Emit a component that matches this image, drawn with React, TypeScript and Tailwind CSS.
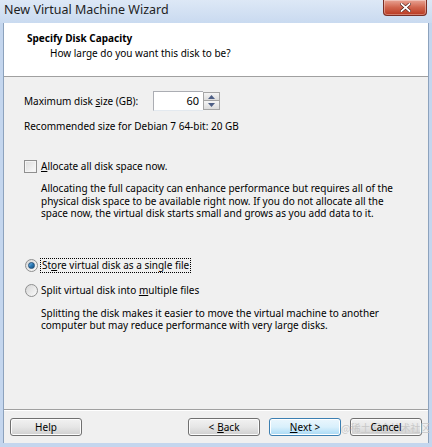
import React from "react";

function Btn({ children, def, className = "" }: { children: React.ReactNode; def?: boolean; className?: string }) {
  return (
    <div
      className={
        "relative flex h-[18px] w-[72px] items-center justify-center rounded-[3px] border text-[10px] leading-none text-black " +
        (def
          ? "border-[#3c7fb1] bg-gradient-to-b from-[#eaf6fd] via-[#d9f0fc] to-[#a7d9f5] shadow-[inset_0_0_0_1px_#ffffff]"
          : "border-[#707070] bg-gradient-to-b from-[#f2f2f2] via-[#e6e6e6] to-[#cfcfcf] shadow-[inset_0_0_0_1px_#fcfcfc]") +
        " " +
        className
      }
    >
      {children}
    </div>
  );
}

export default function App() {
  return (
    <div className="flex h-[447px] w-[432px] flex-col overflow-hidden bg-[#c4d6ee] font-['Noto_Sans','Liberation_Sans',sans-serif] text-black">
      {/* title bar */}
      <div className="relative flex h-[23px] shrink-0 items-start bg-gradient-to-b from-[#dde8f6] to-[#c9daf0]">
        <span className="ml-[4px] mt-[1px] text-[12.5px] leading-[18px] text-[#1e1e1e]">New Virtual Machine Wizard</span>
        <div className="absolute right-[5px] top-0 flex h-[16px] w-[44px] items-center justify-center rounded-b-[4px] border border-t-0 border-[#7a2e25] bg-gradient-to-b from-[#e8a394] via-[#d0644d] to-[#b8371f] shadow-[inset_0_0_0_1px_rgba(255,255,255,0.35)]">
          <svg width="11" height="9" viewBox="0 0 11 9">
            <path d="M1.5 1 L9.5 8 M9.5 1 L1.5 8" stroke="#4a1a14" strokeWidth="3" strokeLinecap="square" />
            <path d="M1.5 1 L9.5 8 M9.5 1 L1.5 8" stroke="#ffffff" strokeWidth="1.8" strokeLinecap="square" />
          </svg>
        </div>
      </div>

      {/* client */}
      <div className="mx-[3px] flex h-[420px] w-[426px] flex-col border-x border-[#8ca2bd] bg-[#f0f0f0]">
        {/* header */}
        <div className="h-[54px] shrink-0 border-b border-[#a0a0a0] bg-white pl-[23px] pt-[8px]">
          <div className="text-[10px] font-bold leading-[15px]">Specify Disk Capacity</div>
          <div className="ml-[23px] text-[10px] leading-[15px]">How large do you want this disk to be?</div>
        </div>

        {/* content */}
        <div className="flex flex-1 flex-col pl-[20px] pt-[14px] text-[10px]">
          <div className="flex h-[20px] items-center">
            <span className="w-[129px] leading-[15px]">
              Maximum disk <span className="underline underline-offset-1">s</span>ize (GB):
            </span>
            <div className="flex h-[20px] w-[50px] items-center justify-end border border-[#abadb3] border-b-[#e3e9ef] border-r-0 bg-white pr-[4px] text-[11px]">
              60
            </div>
            <div className="flex h-[18px] w-[17px] flex-col">
              <div className="flex h-[9px] items-center justify-center border border-[#a5a5a5] bg-gradient-to-b from-[#f5f5f5] to-[#dcdcdc]">
                <svg width="7" height="4" viewBox="0 0 7 4"><path d="M0 4 L3.5 0 L7 4 Z" fill="#4d5e85" /></svg>
              </div>
              <div className="flex h-[9px] items-center justify-center border border-t-0 border-[#a5a5a5] bg-gradient-to-b from-[#f5f5f5] to-[#dcdcdc]">
                <svg width="7" height="4" viewBox="0 0 7 4"><path d="M0 0 L7 0 L3.5 4 Z" fill="#4d5e85" /></svg>
              </div>
            </div>
          </div>
          <div className="mt-[8px] leading-[15px]">Recommended size for Debian 7 64-bit: 20 GB</div>

          <div className="mt-[25px] flex h-[15px] items-center">
            <div className="mr-[4px] h-[13px] w-[13px] border border-[#8f8f8f] bg-gradient-to-br from-[#dcdcdc] to-[#fbfbfb] shadow-[inset_0_0_0_1px_#f4f4f4]" />
            <span className="leading-[15px]">
              <span className="underline underline-offset-1">A</span>llocate all disk space now.
            </span>
          </div>
          <div className="ml-[17px] mt-[8px] leading-[12.5px]">
            Allocating the full capacity can enhance performance but requires all of the
            <br />
            physical disk space to be available right now. If you do not allocate all the
            <br />
            space now, the virtual disk starts small and grows as you add data to it.
          </div>

          <div className="mt-[38px] flex h-[15px] items-center">
            <div className="relative ml-[1px] mr-[2px] flex h-[13px] w-[13px] items-center justify-center rounded-full border border-[#8e8f8f] bg-gradient-to-br from-[#d6d6d6] to-[#fbfbfb]">
              <div className="h-[7px] w-[7px] rounded-full border border-[#1f4f7a] bg-gradient-to-br from-[#7fc1ee] via-[#2a79b6] to-[#16507f]" />
            </div>
            <span className="border border-dotted border-black px-[1px] leading-[13px]">
              St<span className="underline underline-offset-1">o</span>re virtual disk as a single file
            </span>
          </div>
          <div className="mt-[10px] flex h-[15px] items-center">
            <div className="ml-[1px] mr-[3px] h-[13px] w-[13px] rounded-full border border-[#8e8f8f] bg-gradient-to-br from-[#d6d6d6] to-[#fbfbfb]" />
            <span className="leading-[15px]">
              Split virtual disk into <span className="underline underline-offset-1">m</span>ultiple files
            </span>
          </div>
          <div className="ml-[17px] mt-[9px] leading-[12px]">
            Splitting the disk makes it easier to move the virtual machine to another
            <br />
            computer but may reduce performance with very large disks.
          </div>
        </div>

        {/* divider */}
        <div className="h-[1px] shrink-0 bg-[#a0a0a0]" />
        <div className="h-[1px] shrink-0 bg-white" />

        {/* buttons */}
        <div className="flex h-[32px] shrink-0 items-start pl-[6px] pr-[6px] pt-[7px]">
          <Btn>Help</Btn>
          <div className="flex-1" />
          <Btn>
            &lt; <span className="ml-[3px] underline underline-offset-1">B</span>ack
          </Btn>
          <Btn def className="ml-[9px]">
            <span className="underline underline-offset-1">N</span>ext &gt;
          </Btn>
          <Btn className="ml-[9px]">
            <span className="absolute left-[-10px] top-[3px] whitespace-nowrap font-['Noto_Sans_CJK_SC',sans-serif] text-[10px] leading-[12px] text-[#c8c8c8]">
              @稀土掘金技术社区
            </span>
            <span className="relative">Cancel</span>
          </Btn>
        </div>
      </div>
    </div>
  );
}
